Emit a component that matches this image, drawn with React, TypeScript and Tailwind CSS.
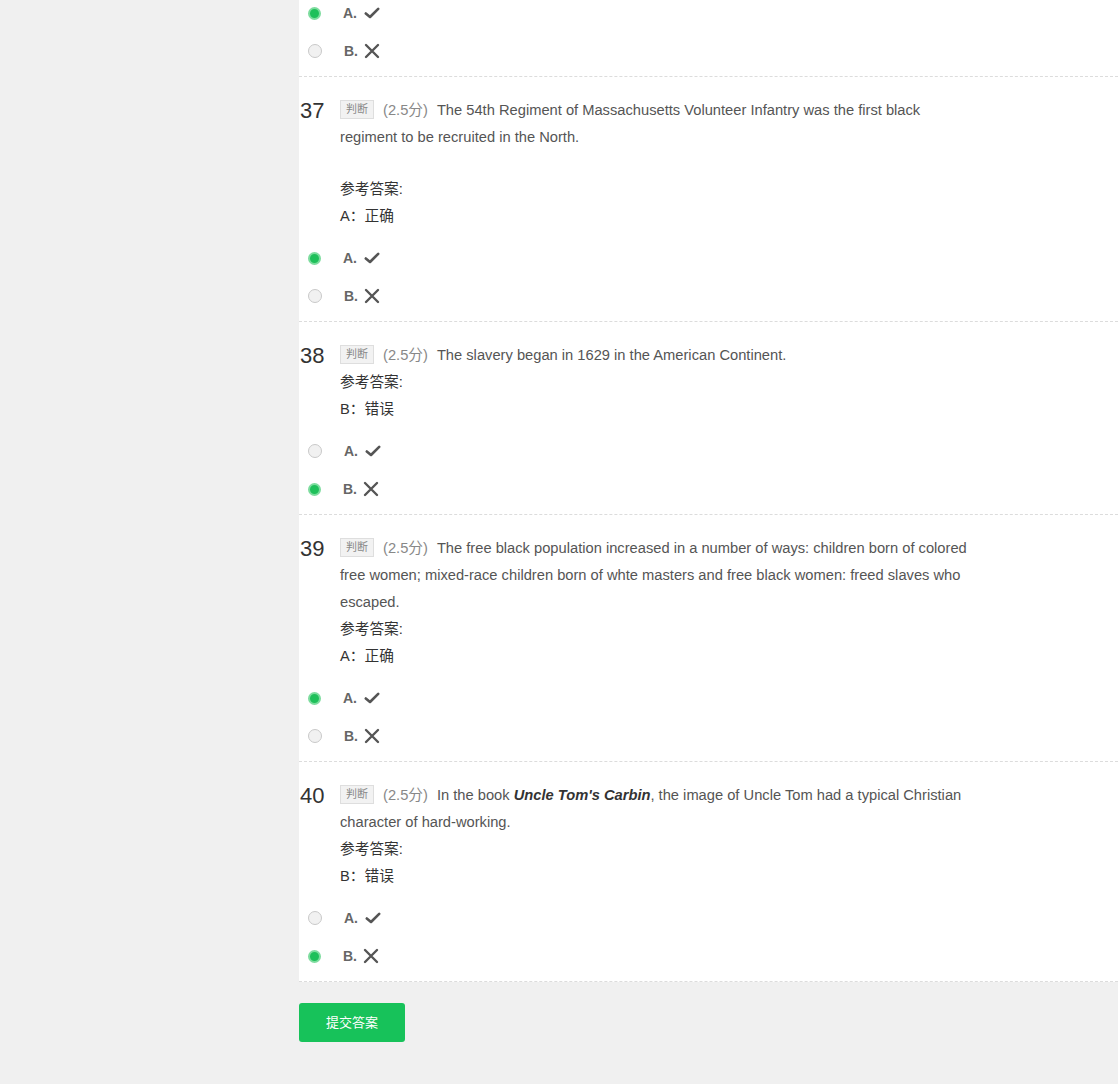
import React from 'react'

interface Question {
  no?: number
  text?: React.ReactNode
  gap?: boolean
  answer?: string
  picked: 'A' | 'B'
}

const questions: Question[] = [
  { picked: 'A' },
  {
    no: 37,
    text: 'The 54th Regiment of Massachusetts Volunteer Infantry was the first black regiment to be recruited in the North.',
    gap: true,
    answer: 'A：正确',
    picked: 'A',
  },
  {
    no: 38,
    text: 'The slavery began in 1629 in the American Continent.',
    answer: 'B：错误',
    picked: 'B',
  },
  {
    no: 39,
    text: 'The free black population increased in a number of ways: children born of colored free women; mixed-race children born of whte masters and free black women: freed slaves who escaped.',
    answer: 'A：正确',
    picked: 'A',
  },
  {
    no: 40,
    text: (
      <>
        In the book <b className="italic font-bold text-[#333]">Uncle Tom's Carbin</b>, the image of Uncle Tom had a
        typical Christian character of hard-working.
      </>
    ),
    answer: 'B：错误',
    picked: 'B',
  },
]

function Radio({ on }: { on: boolean }) {
  if (on) {
    return (
      <span className="w-[13px] h-[13px] rounded-full bg-[#1ec05a] border-2 border-[#7ddc9e] box-border" />
    )
  }
  return <span className="w-[14px] h-[14px] rounded-full bg-[#f1f1f1] border border-[#c9c9c9] box-border" />
}

function Check() {
  return (
    <svg width="16" height="12" viewBox="0 0 16 12">
      <path d="M1.8 6.5 L6 10 L14.2 1.8" fill="none" stroke="#555" strokeWidth="2.6" strokeLinecap="round" strokeLinejoin="round" />
    </svg>
  )
}

function Cross() {
  return (
    <svg width="16" height="16" viewBox="0 0 16 16">
      <path d="M2 2 L14 14 M14 2 L2 14" fill="none" stroke="#555" strokeWidth="2.4" strokeLinecap="round" />
    </svg>
  )
}

function Options({ picked }: { picked: 'A' | 'B' }) {
  return (
    <div className="flex flex-col">
      <div className="flex items-center h-[38px] pl-[9px]">
        <Radio on={picked === 'A'} />
        <span className="ml-[22px] text-[14px] font-bold text-[#666] mr-[7px]">A.</span>
        <Check />
      </div>
      <div className="flex items-center h-[38px] pl-[9px]">
        <Radio on={picked === 'B'} />
        <span className="ml-[22px] text-[14px] font-bold text-[#666] mr-[6px]">B.</span>
        <Cross />
      </div>
    </div>
  )
}

function QuestionBlock({ q, first }: { q: Question; first: boolean }) {
  return (
    <div className={`border-b border-dashed border-[#dcdcdc] pb-[6px] ${first ? '' : 'pt-[20px]'}`}>
      {q.no && (
        <div className="flex">
          <div className="w-[41px] shrink-0 text-[22px] leading-[27px] text-[#333] pl-px">{q.no}</div>
          <div className="w-[636px] text-[14.7px] leading-[27px] text-[#555]">
            <div>
              <span className="inline-block align-middle -mt-[3px] h-[19px] leading-[17px] px-[5px] border border-[#dedede] bg-[#f2f2f2] text-[11px] text-[#888] mr-[9px]">
                判断
              </span>
              <span className="text-[#888] mr-[9px]">(2.5分)</span>
              {q.text}
            </div>
            {q.gap && <div className="h-[25px]" />}
            <div className="text-[#333]">参考答案:</div>
            <div className="text-[#333]">{q.answer}</div>
          </div>
        </div>
      )}
      <div className={q.no ? 'mt-[9px]' : ''}>
        <Options picked={q.picked} />
      </div>
    </div>
  )
}

export default function App() {
  return (
    <div
      className="min-h-[1084px] w-[1118px] bg-[#f0f0f0] overflow-hidden"
      style={{ fontFamily: '"Liberation Sans", Arial, "Noto Sans CJK SC", sans-serif' }}
    >
      <div className="ml-[299px] -mt-[6px] bg-white">
        {questions.map((q, i) => (
          <QuestionBlock key={i} q={q} first={i === 0} />
        ))}
      </div>
      <div className="ml-[299px] mt-[21px]">
        <button className="w-[106px] h-[39px] rounded-[3px] bg-[#17c25a] text-white text-[13px]">提交答案</button>
      </div>
    </div>
  )
}
